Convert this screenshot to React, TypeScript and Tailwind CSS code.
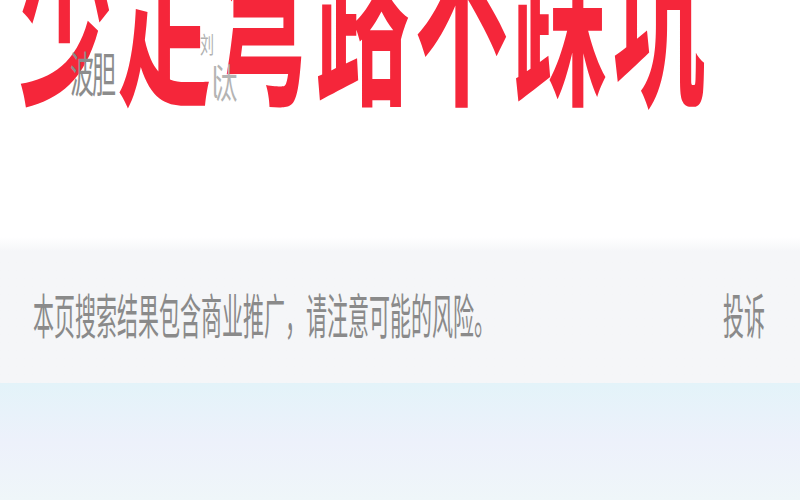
import React from 'react';

const HERO_TEXT = ['少', '走', '弯', '路', '不', '踩', '坑'];

const Hero: React.FC = () => {
  return (
    <div className="relative h-[237px] overflow-hidden bg-white">
      {/* big red slogan, top is cut off */}
      <div className="flex items-end pl-[16px] h-[108px]">
        {HERO_TEXT.map((ch, i) => (
          <span
            key={i}
            className="block w-[99px] text-center text-[94px] leading-[94px] font-bold text-[#f5263a] origin-bottom scale-y-[2.2] -translate-y-[6px]"
          >
            {ch}
          </span>
        ))}
      </div>

      {/* small gray captions lying over the slogan */}
      <span className="absolute left-[70px] top-[48px] text-[24px] leading-[24px] tracking-[-2px] text-[#8c8c8c] origin-top scale-y-[2]">
        波胆
      </span>
      <span className="absolute left-[200px] top-[32px] text-[14px] leading-[14px] text-[#b0b0b0] origin-top scale-y-[1.6]">
        刘
      </span>
      <span className="absolute left-[212px] top-[60px] text-[22px] leading-[22px] tracking-[-3px] text-[#b4b4b4] origin-top scale-y-[1.8]">
        l汰
      </span>
    </div>
  );
};

const Notice: React.FC = () => {
  return (
    <div className="h-[146px] bg-gradient-to-b from-white via-[#f5f6f8] to-[#f5f6f8] from-0% via-[10%] flex items-center justify-between pl-[33px] pr-[35px]">
      <span className="text-[21px] leading-[21px] text-[#8a8a8a] origin-center scale-y-[2.3] translate-y-[4px]">
        本页搜索结果包含商业推广，请注意可能的风险。
      </span>
      <span className="text-[21px] leading-[21px] text-[#8a8a8a] origin-center scale-y-[2.3] translate-y-[4px]">
        投诉
      </span>
    </div>
  );
};

export default function App() {
  return (
    <div
      className="w-[800px] h-[500px] overflow-hidden flex flex-col"
      style={{ fontFamily: '"Noto Sans CJK SC", "Noto Sans", sans-serif' }}
    >
      <Hero />
      <Notice />
      <div className="flex-1 bg-gradient-to-b from-[#e3f3f9] via-[#edf1fb] to-[#eff6f9]" />
    </div>
  );
}
